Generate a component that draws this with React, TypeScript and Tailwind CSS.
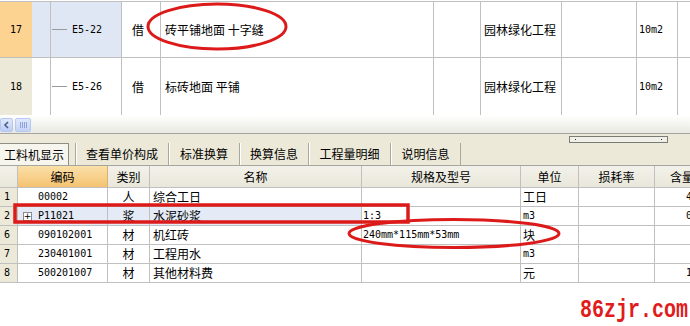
import React from 'react';

const CJK = "font-['Noto_Sans_CJK_SC',sans-serif] text-[12px] leading-none";
const LAT = "font-['DejaVu_Sans_Mono','Noto_Sans_CJK_SC',monospace] text-[10px] leading-none";
const font = (s: string) => (/[\u4e00-\u9fff]/.test(s) ? CJK : LAT);

const topRows = [
    { n: '17', code: 'E5-22', name: '砖平铺地面 十字缝', active: true },
    { n: '18', code: 'E5-26', name: '标砖地面 平铺', active: false },
];

const tabs = [
    { label: '工料机显示', w: 'w-[75px]' },
    { label: '查看单价构成', w: 'w-[93px]' },
    { label: '标准换算', w: 'w-[71px]' },
    { label: '换算信息', w: 'w-[69px]' },
    { label: '工程量明细', w: 'w-[82px]' },
    { label: '说明信息', w: 'w-[70px]' },
];

const matRows = [
    { n: '1', code: '00002', cat: '人', name: '综合工日', spec: '', unit: '工日', amt: '4.580' },
    { n: '2', code: 'P11021', cat: '浆', name: '水泥砂浆', spec: '1:3', unit: 'm3', amt: '0.026', sel: true },
    { n: '6', code: '090102001', cat: '材', name: '机红砖', spec: '240mm*115mm*53mm', unit: '块', amt: '' },
    { n: '7', code: '230401001', cat: '材', name: '工程用水', spec: '', unit: 'm3', amt: '' },
    { n: '8', code: '500201007', cat: '材', name: '其他材料费', spec: '', unit: '元', amt: '1.000' },
];

function TopRow({ n, code, name, active, last }: { n: string; code: string; name: string; active: boolean; last?: boolean }) {
    return (
        <div className={`grid grid-cols-[32px_19px_71px_39px_273px_47px_81px_75px_41px_12px] ${last ? 'h-[57px]' : 'h-[56px] border-b border-[#c0c0c0]'}`}>
            <div className={`${active ? 'bg-[#fcd391]' : 'bg-[#ece9d8]'} flex items-center justify-center ${LAT}`}>{n}</div>
            <div className={`${active ? 'bg-[#dfe7f4]' : ''} border-r border-[#c0c0c0]`} />
            <div className={`${active ? 'bg-[#dfe7f4]' : ''} border-r border-[#c0c0c0] flex items-center`}>
                <span className="w-[15px] h-px bg-[#9a9a9a] ml-px mr-[5px]" />
                <span className={LAT}>{code}</span>
            </div>
            <div className={`border-r border-[#c0c0c0] flex items-center justify-center pr-[6px] ${CJK}`}>借</div>
            <div className={`border-r border-[#c0c0c0] flex items-center pl-[4px] whitespace-pre ${CJK}`}>{name}</div>
            <div className="border-r border-[#c0c0c0]" />
            <div className={`border-r border-[#c0c0c0] flex items-center pl-[3px] ${CJK}`}>园林绿化工程</div>
            <div className="border-r border-[#c0c0c0]" />
            <div className={`border-r border-[#c0c0c0] flex items-center pl-[2px] ${LAT}`}>10m2</div>
            <div />
        </div>
    );
}

function MatRow({ r }: { r: (typeof matRows)[number] }) {
    const cell = 'border-r border-[#c0c0c0] flex items-center overflow-hidden whitespace-nowrap';
    const tint = r.sel ? 'bg-[#e4ebf6]' : '';
    return (
        <div className="grid grid-cols-[18px_90px_42px_212px_159px_58px_76px_35px] h-[19px] border-b border-[#c0c0c0]">
            <div className={`bg-[#ece9d8] border-r border-[#c0c0c0] flex items-center pl-[4px] ${LAT}`}>{r.n}</div>
            <div className={`${cell} ${tint} ${r.sel ? 'pl-[5px]' : 'pl-[20px]'}`}>
                {r.sel && (
                    <span className="w-[9px] h-[9px] border border-[#8a8a8a] bg-white flex items-center justify-center mr-[6px] text-[9px] leading-none font-['DejaVu_Sans',sans-serif]">+</span>
                )}
                <span className={LAT}>{r.code}</span>
            </div>
            <div className={`${cell} ${tint} justify-center ${CJK}`}>{r.cat}</div>
            <div className={`${cell} ${tint} pl-[3px] ${CJK}`}>{r.name}</div>
            <div className={`${cell} pl-px ${font(r.spec)}`}>{r.spec}</div>
            <div className={`${cell} pl-[2px] ${font(r.unit)}`}>{r.unit}</div>
            <div className={cell} />
            <div className={`flex items-center overflow-hidden whitespace-nowrap pl-[31px] ${LAT}`}>{r.amt}</div>
        </div>
    );
}

export default function App() {
    return (
        <div className="relative w-[690px] h-[326px] overflow-hidden bg-white text-black flex flex-col">
            {/* upper grid */}
            <div className="pt-px">
                <div className="border-t border-[#c0c0c0]">
                    {topRows.map((r, i) => (
                        <TopRow key={r.n} {...r} last={i === topRows.length - 1} />
                    ))}
                </div>
            </div>

            {/* horizontal scroll strip */}
            <div className="h-[18px] bg-gradient-to-b from-white to-[#e9e9e2] flex items-center gap-[2px] pt-[1px]">
                <div className="w-[13px] h-[14px] rounded-[2px] border border-[#b7c8f0] bg-gradient-to-b from-[#dfe8fd] to-[#bccdf5] flex items-center justify-center">
                    <svg width="7" height="8" viewBox="0 0 7 8">
                        <path d="M5 1 L2 4 L5 7" fill="none" stroke="#4d6185" strokeWidth="1.6" />
                    </svg>
                </div>
                <div className="w-[16px] h-[14px] rounded-[2px] border border-[#b7c8f0] bg-gradient-to-b from-[#dfe8fd] to-[#c3d2f6] flex items-center justify-center gap-px">
                    <span className="w-px h-[6px] bg-[#8da3d6]" />
                    <span className="w-px h-[6px] bg-[#8da3d6]" />
                    <span className="w-px h-[6px] bg-[#8da3d6]" />
                    <span className="w-px h-[6px] bg-[#8da3d6]" />
                </div>
            </div>

            {/* tab bar */}
            <div className="h-[33px] bg-[#ece9d8] border-t border-b border-[#a6a6a0] flex items-end">
                {tabs.map((t, i) => (
                    <div key={t.label} className={`${t.w} h-[22px] flex items-center shrink-0 ${i === 0 ? 'justify-start' : 'justify-center border-l border-[#a9a8a0] shadow-[inset_1px_0_0_#ffffff]'} ${CJK}`}>
                        {i === 0 ? (
                            <div className="w-[69px] h-[22px] bg-[#f6f5ee] border-t border-r border-[#8e8e88] flex items-center justify-center">{t.label}</div>
                        ) : (
                            t.label
                        )}
                    </div>
                ))}
                <div className="w-px h-[22px] bg-[#a9a8a0]" />
                <div className="flex-1" />
                <div className="self-start mt-[2px] mr-[22px] w-[99px] h-[7px] border border-[#7b7b75] bg-[#f0efe8] flex items-center justify-between px-[5px]">
                    <span className="w-px h-px bg-[#333]" />
                    <span className="w-px h-px bg-[#333]" />
                </div>
            </div>

            {/* lower grid header */}
            <div className={`grid grid-cols-[18px_90px_42px_212px_159px_58px_76px_35px] h-[22px] border-b border-[#c0c0c0] bg-gradient-to-b from-[#f3f2ea] to-[#e9e7da] ${CJK}`}>
                <div className="border-r border-[#c0c0c0]" />
                <div className="border-r border-[#d8b070] bg-gradient-to-b from-[#fbe0a8] to-[#f4c271] flex items-center justify-center">编码</div>
                <div className="border-r border-[#c0c0c0] flex items-center justify-center">类别</div>
                <div className="border-r border-[#c0c0c0] flex items-center justify-center">名称</div>
                <div className="border-r border-[#c0c0c0] flex items-center justify-center">规格及型号</div>
                <div className="border-r border-[#c0c0c0] flex items-center justify-center">单位</div>
                <div className="border-r border-[#c0c0c0] flex items-center justify-center">损耗率</div>
                <div className="flex items-center pl-[15px] whitespace-nowrap">含量</div>
            </div>
            {matRows.map((r) => (
                <MatRow key={r.n} r={r} />
            ))}

            {/* watermark */}
            <div className="flex-1 flex items-end justify-end pb-[3px] pr-[2px]">
                <span className="font-['Liberation_Mono',monospace] font-bold text-[20px] leading-none text-[#e01c1c] scale-y-125 origin-bottom">86zjr.com</span>
            </div>

            {/* red annotations */}
            <svg className="absolute inset-0 pointer-events-none" width="690" height="326" viewBox="0 0 690 326">
                <ellipse cx="217" cy="26.5" rx="69" ry="22.5" fill="none" stroke="#dc1a1a" strokeWidth="3" />
                <rect x="15" y="205" width="393" height="17" fill="none" stroke="#dc1a1a" strokeWidth="3.5" />
                <ellipse cx="454" cy="233.5" rx="105" ry="14" fill="none" stroke="#dc1a1a" strokeWidth="3" />
            </svg>
        </div>
    );
}
